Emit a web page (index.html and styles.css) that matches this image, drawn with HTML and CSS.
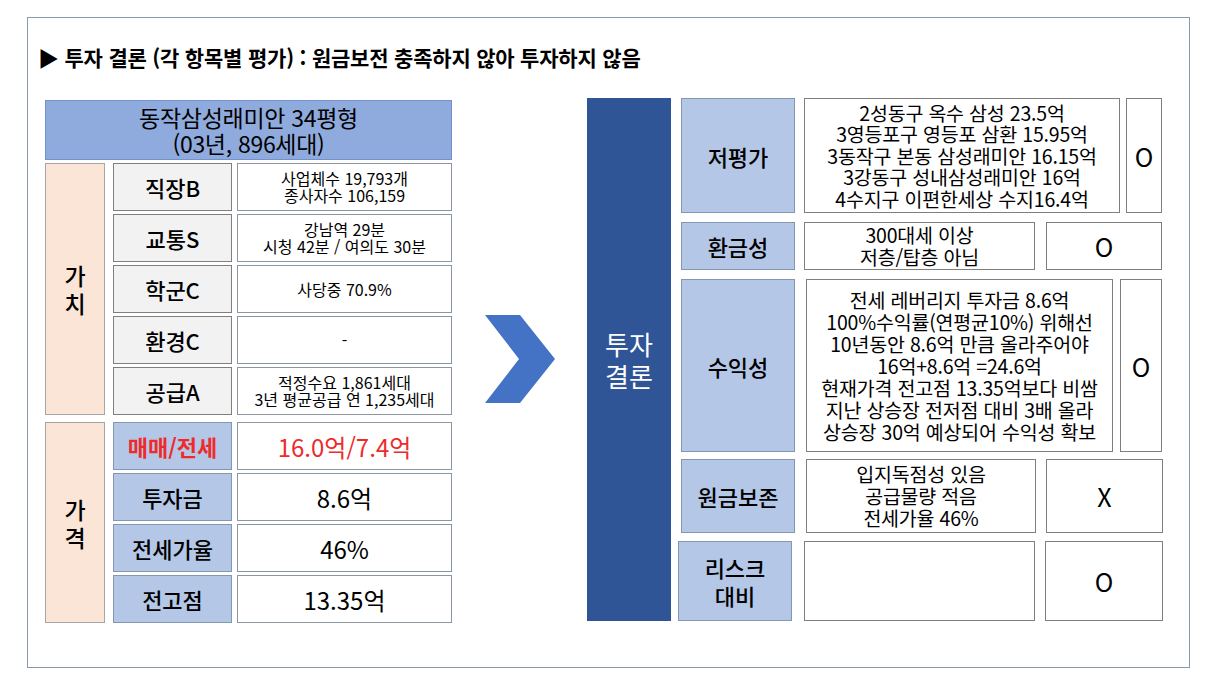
FILE: index.html
```html
<!DOCTYPE html>
<html lang="ko">
<head>
<meta charset="utf-8">
<title>투자 결론</title>
<link rel="stylesheet" href="styles.css">
</head>
<body>
<div class="frame">
  <h1 class="title">▶ 투자 결론 (각 항목별 평가) : 원금보전 충족하지 않아 투자하지 않음</h1>
  <div class="main">
    <section class="left">
      <div class="apt">동작삼성래미안 34평형<br>(03년, 896세대)</div>
      <div class="group group-value">
        <div class="cat">가<br>치</div>
        <div class="rows">
          <div class="row"><div class="lab lab-gray">직장B</div><div class="val small">사업체수 19,793개<br>종사자수 106,159</div></div>
          <div class="row"><div class="lab lab-gray">교통S</div><div class="val small">강남역 29분<br>시청 42분 / 여의도 30분</div></div>
          <div class="row"><div class="lab lab-gray">학군C</div><div class="val small">사당중 70.9%</div></div>
          <div class="row"><div class="lab lab-gray">환경C</div><div class="val small">-</div></div>
          <div class="row"><div class="lab lab-gray">공급A</div><div class="val small">적정수요 1,861세대<br>3년 평균공급 연 1,235세대</div></div>
        </div>
      </div>
      <div class="group group-price">
        <div class="cat">가<br>격</div>
        <div class="rows">
          <div class="row"><div class="lab lab-blue red">매매/전세</div><div class="val big red">16.0억/7.4억</div></div>
          <div class="row"><div class="lab lab-blue">투자금</div><div class="val big">8.6억</div></div>
          <div class="row"><div class="lab lab-blue">전세가율</div><div class="val big">46%</div></div>
          <div class="row"><div class="lab lab-blue">전고점</div><div class="val big">13.35억</div></div>
        </div>
      </div>
    </section>

    <div class="arrow">
      <svg width="72" height="90" viewBox="0 0 72 90" aria-hidden="true">
        <polygon points="0,0 35,0 70,44 35,88 0,88 34,44" fill="#4472c4"/>
      </svg>
    </div>

    <section class="right">
      <div class="verdict">투자<br>결론</div>
      <div class="eval">
        <div class="erow r1">
          <div class="elab">저평가</div>
          <div class="etext">2성동구 옥수 삼성 23.5억<br>3영등포구 영등포 삼환 15.95억<br>3동작구 본동 삼성래미안 16.15억<br>3강동구 성내삼성래미안 16억<br>4수지구 이편한세상 수지16.4억</div>
          <div class="emark">O</div>
        </div>
        <div class="erow r2">
          <div class="elab">환금성</div>
          <div class="etext">300대세 이상<br>저층/탑층 아님</div>
          <div class="emark">O</div>
        </div>
        <div class="erow r3">
          <div class="elab">수익성</div>
          <div class="etext">전세 레버리지 투자금 8.6억<br>100%수익률(연평균10%) 위해선<br>10년동안 8.6억 만큼 올라주어야<br>16억+8.6억 =24.6억<br>현재가격 전고점 13.35억보다 비쌈<br>지난 상승장 전저점 대비 3배 올라<br>상승장 30억 예상되어 수익성 확보</div>
          <div class="emark">O</div>
        </div>
        <div class="erow r4">
          <div class="elab">원금보존</div>
          <div class="etext">입지독점성 있음<br>공급물량 적음<br>전세가율 46%</div>
          <div class="emark">X</div>
        </div>
        <div class="erow r5">
          <div class="elab">리스크<br>대비</div>
          <div class="etext"></div>
          <div class="emark">O</div>
        </div>
      </div>
    </section>
  </div>
</div>
</body>
</html>
```

FILE: styles.css
```css
* { box-sizing: border-box; }

body {
  margin: 0;
  background: #ffffff;
  color: #000000;
  font-family: "Noto Sans CJK KR", "Noto Sans", sans-serif;
}

.frame {
  margin: 17px 0 0 27px;
  width: 1163px;
  height: 651px;
  border: 1px solid #8a99a8;
}

.title {
  margin: 0;
  padding: 26px 0 0 10px;
  height: 51px;
  font-size: 21px;
  line-height: 26px;
  font-weight: 700;
  letter-spacing: -0.2px;
}

.main {
  display: flex;
  margin-top: 29px;
  padding-left: 17px;
}

/* ---------- left table ---------- */
.left {
  width: 407px;
  margin-top: 2px;
}

.apt {
  height: 60px;
  background: #8faadc;
  border: 1px solid #7392cc;
  display: flex;
  flex-direction: column;
  justify-content: center;
  text-align: center;
  font-size: 23px;
  line-height: 26px;
  letter-spacing: -0.3px;
}

.group {
  display: flex;
  gap: 8px;
  margin-top: 3px;
}
.group-price { margin-top: 7px; }

.cat {
  width: 60px;
  background: #fbe5d6;
  border: 1px solid #a6a6a6;
  display: flex;
  align-items: center;
  justify-content: center;
  text-align: center;
  font-size: 23px;
  line-height: 28px;
  font-weight: 500;
}

.rows {
  width: 339px;
  display: flex;
  flex-direction: column;
  gap: 3px;
}

.row {
  display: flex;
  gap: 5px;
  height: 48px;
}

.lab {
  width: 119px;
  border: 1px solid #7f7f7f;
  display: flex;
  align-items: center;
  justify-content: center;
  font-size: 22px;
  font-weight: 500;
}
.lab-gray { background: #f2f2f2; }
.lab-blue { background: #b4c7e7; border-color: #8497b0; }

.val {
  flex: 1;
  background: #ffffff;
  border: 1px solid #8c96a0;
  display: flex;
  flex-direction: column;
  align-items: center;
  justify-content: center;
  text-align: center;
}
.val.small { font-size: 16px; line-height: 17px; }
.val.big { font-size: 24px; }

.red { color: #ee2b2b; }
.lab.red { font-weight: 700; }

/* ---------- arrow ---------- */
.arrow {
  width: 135px;
  display: flex;
  align-items: center;
  padding-left: 33px;
}
.arrow svg { display: block; margin-top: -2px; }

/* ---------- right ---------- */
.right {
  display: flex;
  gap: 10px;
}

.verdict {
  width: 84px;
  height: 523px;
  background: #2f5597;
  color: #ffffff;
  display: flex;
  align-items: center;
  justify-content: center;
  text-align: center;
  font-size: 26px;
  line-height: 32px;
}

.eval {
  width: 482px;
  display: flex;
  flex-direction: column;
}

.erow { display: flex; }

.elab {
  width: 114px;
  background: #b4c7e7;
  border: 1px solid #8497b0;
  display: flex;
  align-items: center;
  justify-content: center;
  text-align: center;
  font-size: 22px;
  line-height: 28px;
  font-weight: 500;
}

.etext {
  background: #ffffff;
  border: 1px solid #7f7f7f;
  display: flex;
  flex-direction: column;
  justify-content: center;
  text-align: center;
  font-size: 19.5px;
  line-height: 22px;
  letter-spacing: -0.2px;
}

.emark {
  background: #ffffff;
  border: 1px solid #7f7f7f;
  display: flex;
  align-items: center;
  justify-content: center;
  font-size: 25px;
}

.r1 { height: 115px; }
.r1 .etext { margin-left: 9px; width: 316px; line-height: 21.5px; }
.r1 .emark { margin-left: 6px; width: 36px; }

.r2 { height: 48px; margin-top: 9px; }
.r2 .etext { margin-left: 9px; width: 231px; }
.r2 .emark { margin-left: 11px; width: 116px; }

.r3 { height: 173px; margin-top: 9px; }
.r3 .etext { margin-left: 11px; width: 307px; }
.r3 .emark { margin-left: 7px; width: 42px; }

.r4 { height: 74px; margin-top: 7px; }
.r4 .etext { margin-left: 11px; width: 230px; }
.r4 .emark { margin-left: 10px; width: 117px; }

.r5 { height: 80px; margin-top: 8px; }
.r5 .elab { margin-left: -3px; }
.r5 .etext { margin-left: 12px; width: 231px; }
.r5 .emark { margin-left: 10px; width: 118px; }
```
